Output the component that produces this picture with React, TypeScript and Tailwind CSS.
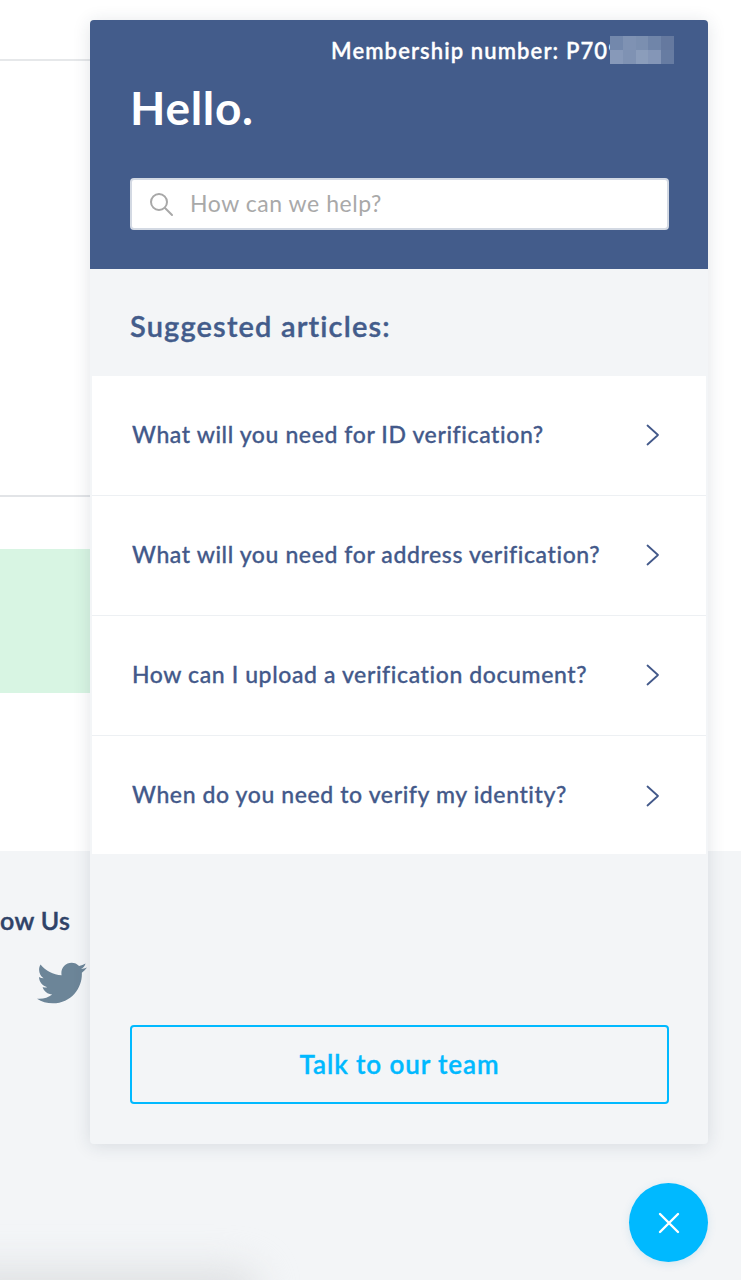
import { FaTwitter } from "react-icons/fa";

const articles = [
  "What will you need for ID verification?",
  "What will you need for address verification?",
  "How can I upload a verification document?",
  "When do you need to verify my identity?",
];

function Chevron() {
  return (
    <svg className="mt-[2px]" width="16" height="24" viewBox="0 0 16 24" fill="none" stroke="#43598a" strokeWidth="1.8" strokeLinecap="round" strokeLinejoin="round">
      <path d="M3.5 2.5 14 12 3.5 21.5" />
    </svg>
  );
}

export default function App() {
  return (
    <div className="relative h-[1280px] w-[741px] overflow-hidden bg-white font-['Lato',sans-serif]">
      <div className="flex h-full flex-col">
        <div className="mt-[59px] h-[2px] w-[100px] bg-[#e6e8ea]" />
        <div className="mt-[434px] h-[2px] w-[100px] bg-[#e2e4e7]" />
        <div className="mt-[52px] h-[144px] w-[100px] bg-[#d8f5e3]" />
        <div className="mt-[158px] flex-1 bg-[#f3f5f7] pt-[52px]">
          <div className="w-[69px] text-right text-[25px] leading-[34px] font-semibold tracking-[0.35px] whitespace-nowrap text-[#2f4368] [-webkit-text-stroke:0.4px_#2f4368]">ow Us</div>
          <FaTwitter className="mt-[21px] ml-[37px] h-[50px] w-[50px] text-[#6c8598]" />
        </div>
      </div>

      <div className="absolute bottom-[-40px] left-[-60px] h-[52px] w-[320px] rounded-full bg-[#dfe1e3] blur-[18px]" />

      <div className="absolute top-[20px] left-[90px] flex h-[1124px] w-[618px] flex-col overflow-hidden rounded-[4px] bg-[#f3f5f7] shadow-[0_2px_18px_rgba(30,45,70,0.13)]">
        <div className="flex h-[249px] flex-col bg-[#435c8b] px-[40px]">
          <div className="relative mt-[17px] flex h-[28px] items-center justify-end pr-[46px] text-[22px] leading-[28px] font-semibold tracking-[1.1px] whitespace-nowrap text-white [-webkit-text-stroke:0.3px_#ffffff]">
            <span>Membership number: P709</span>
            <div className="absolute top-[-1px] right-[-6px] grid h-[28px] w-[64px] grid-cols-5 grid-rows-2">
              <div className="bg-[#7388ac]" />
              <div className="bg-[#7f92b3]" />
              <div className="bg-[#7b8fb0]" />
              <div className="bg-[#7085a9]" />
              <div className="bg-[#65799f]" />
              <div className="bg-[#8799b9]" />
              <div className="bg-[#7f92b3]" />
              <div className="bg-[#8b9dbb]" />
              <div className="bg-[#8496b7]" />
              <div className="bg-[#677ca2]" />
            </div>
          </div>
          <h1 className="mt-[11px] text-[46px] leading-[64px] font-bold tracking-[0.7px] text-white">Hello.</h1>
          <div className="mt-[38px] flex h-[52px] w-[539px] items-center rounded-[4px] border-2 border-[#d3d9e3] bg-white pl-[17px]">
            <svg width="25" height="25" viewBox="0 0 25 25" fill="none" stroke="#a8a8a8" strokeWidth="2" strokeLinecap="round">
              <circle cx="10" cy="10" r="8" />
              <path d="M16 16l7 7" />
            </svg>
            <span className="mb-[2px] ml-[16px] text-[23px] tracking-[0.55px] text-[#a9a9a9]">How can we help?</span>
          </div>
        </div>

        <div className="flex h-[107px] items-center px-[40px] pt-[6px]">
          <h2 className="text-[29px] font-semibold tracking-[1.15px] text-[#435c8b] [-webkit-text-stroke:0.4px_#435c8b]">Suggested articles:</h2>
        </div>

        <div className="mx-[2px] flex h-[478px] flex-col divide-y divide-[#edf0f3] bg-white">
          {articles.map((a) => (
            <div key={a} className="flex h-[120px] shrink-0 items-center justify-between pr-[46px] pb-[3px] pl-[40px] last:h-[118px] last:pb-[1px]">
              <span className="text-[23px] font-medium tracking-[0.6px] text-[#43598a] [-webkit-text-stroke:0.3px_#43598a]">{a}</span>
              <Chevron />
            </div>
          ))}
        </div>

        <div className="flex flex-1 flex-col justify-end px-[40px] pb-[40px]">
          <div className="flex h-[79px] w-[539px] items-center justify-center rounded-[4px] border-2 border-[#00b9ff] text-[26px] font-semibold tracking-[0.9px] text-[#00b9ff] [-webkit-text-stroke:0.35px_#00b9ff]">
            Talk to our team
          </div>
        </div>
      </div>

      <div className="absolute top-[1183px] left-[629px] flex h-[79px] w-[79px] items-center justify-center rounded-full bg-[#00b9ff] shadow-[0_2px_10px_rgba(0,120,180,0.12)]">
        <svg width="22" height="22" viewBox="0 0 22 22" fill="none" stroke="#fff" strokeWidth="2.4" strokeLinecap="round">
          <path d="M2 2l18 18M20 2L2 20" />
        </svg>
      </div>
    </div>
  );
}
